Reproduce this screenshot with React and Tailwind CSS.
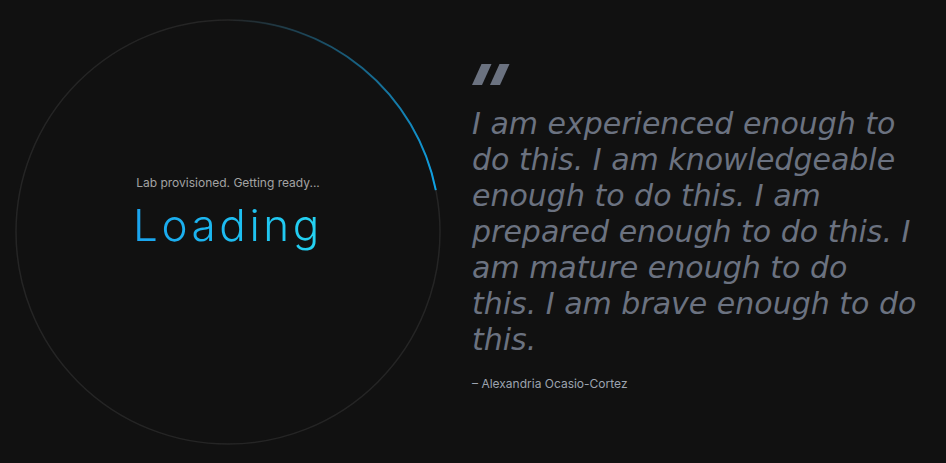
import React from "react";

const R = 212;
const C = 213;
const endAngle = (-11.4 * Math.PI) / 180;
const endX = C + R * Math.cos(endAngle);
const endY = C + R * Math.sin(endAngle);

function ProgressRing() {
  return (
    <svg className="absolute inset-0" width="426" height="426" viewBox="0 0 426 426">
      <defs>
        <linearGradient id="arc" gradientUnits="userSpaceOnUse" x1={C} y1={C - R} x2={endX} y2={endY}>
          <stop offset="0" stopColor="#0ea5e9" stopOpacity="0" />
          <stop offset="1" stopColor="#0ea5e9" stopOpacity="1" />
        </linearGradient>
      </defs>
      <circle cx={C} cy={C} r={R} fill="none" stroke="#252525" strokeWidth="1.5" />
      <path
        d={`M ${C} ${C - R} A ${R} ${R} 0 0 1 ${endX} ${endY}`}
        fill="none"
        stroke="url(#arc)"
        strokeWidth="2"
      />
    </svg>
  );
}

function QuoteMark() {
  return (
    <svg width="42" height="22" viewBox="0 0 42 22" className="block">
      <polygon points="0,21 10,21 19.5,0 9.5,0" fill="#6b7280" />
      <polygon points="18,21 28,21 37.5,0 27.5,0" fill="#6b7280" />
    </svg>
  );
}

export default function App() {
  return (
    <div className="h-[463px] w-[946px] bg-[#111111] flex items-center pl-[15px] gap-[31px] overflow-hidden">
      <div className="relative w-[426px] h-[426px] shrink-0 flex flex-col items-center justify-center pb-[36px]">
        <ProgressRing />
        <div className="relative text-[12px] leading-4 text-[#a3a3a3] font-['Inter',sans-serif]">
          Lab provisioned. Getting ready...
        </div>
        <div className="relative mt-[6px] text-[44px] leading-[56px] font-light tracking-[3.6px] font-['Inter',sans-serif] bg-linear-to-r from-[#1aa3ee] to-[#25d4f2] bg-clip-text text-transparent">
          Loading
        </div>
      </div>

      <div className="self-start mt-[64px] flex flex-col w-[450px]">
        <QuoteMark />
        <p className="mt-[20px] text-[30px] leading-[36px] italic text-[#6b7280] font-['DejaVu_Sans',sans-serif] whitespace-nowrap">
          I am experienced enough to
          <br />
          do this. I am knowledgeable
          <br />
          enough to do this. I am
          <br />
          prepared enough to do this. I
          <br />
          am mature enough to do
          <br />
          this. I am brave enough to do
          <br />
          this.
        </p>
        <div className="mt-[18px] text-[12px] leading-4 text-[#9ca3af] font-['Inter',sans-serif]">
          – Alexandria Ocasio-Cortez
        </div>
      </div>
    </div>
  );
}
